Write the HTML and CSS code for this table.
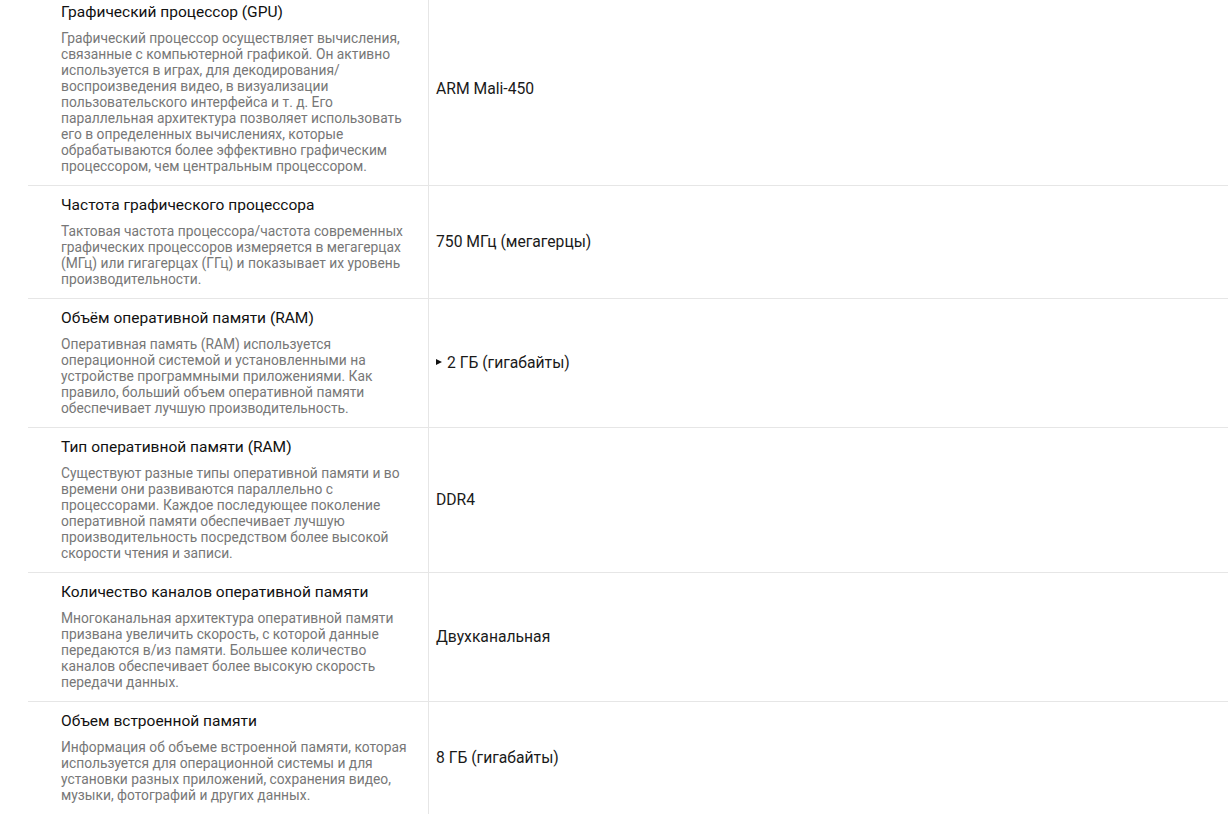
FILE: index.html
```html
<!DOCTYPE html>
<html lang="ru">

<head>
  <meta charset="UTF-8" />
  <meta name="viewport" content="width=device-width, initial-scale=1.0" />
  <title>Характеристики</title>
  <link rel="stylesheet" href="styles.css">
</head>

<body>
  <main class="specs">
    <div class="spec-row">
      <div class="spec-name">
        <h3 class="spec-title">Графический процессор (GPU)</h3>
        <p class="spec-desc">Графический процессор осуществляет вычисления, связанные с компьютерной графикой. Он активно используется в играх, для декодирования/ воспроизведения видео, в визуализации пользовательского интерфейса и т. д. Его параллельная архитектура позволяет использовать его в определенных вычислениях, которые обрабатываются более эффективно графическим процессором, чем центральным процессором.</p>
      </div>
      <div class="spec-value">ARM Mali-450</div>
    </div>

    <div class="spec-row">
      <div class="spec-name">
        <h3 class="spec-title">Частота графического процессора</h3>
        <p class="spec-desc">Тактовая частота процессора/частота современных графических процессоров измеряется в мегагерцах (МГц) или гигагерцах (ГГц) и показывает их уровень производительности.</p>
      </div>
      <div class="spec-value">750 МГц (мегагерцы)</div>
    </div>

    <div class="spec-row">
      <div class="spec-name">
        <h3 class="spec-title">Объём оперативной памяти (RAM)</h3>
        <p class="spec-desc">Оперативная память (RAM) используется операционной системой и установленными на устройстве программными приложениями. Как правило, больший объем оперативной памяти обеспечивает лучшую производительность.</p>
      </div>
      <div class="spec-value">
        <details class="spec-details">
          <summary>2 ГБ (гигабайты)</summary>
        </details>
      </div>
    </div>

    <div class="spec-row">
      <div class="spec-name">
        <h3 class="spec-title">Тип оперативной памяти (RAM)</h3>
        <p class="spec-desc">Существуют разные типы оперативной памяти и во времени они развиваются параллельно с процессорами. Каждое последующее поколение оперативной памяти обеспечивает лучшую производительность посредством более высокой скорости чтения и записи.</p>
      </div>
      <div class="spec-value">DDR4</div>
    </div>

    <div class="spec-row">
      <div class="spec-name">
        <h3 class="spec-title">Количество каналов оперативной памяти</h3>
        <p class="spec-desc">Многоканальная архитектура оперативной памяти призвана увеличить скорость, с которой данные передаются в/из памяти. Большее количество каналов обеспечивает более высокую скорость передачи данных.</p>
      </div>
      <div class="spec-value">Двухканальная</div>
    </div>

    <div class="spec-row">
      <div class="spec-name">
        <h3 class="spec-title">Объем встроенной памяти</h3>
        <p class="spec-desc">Информация об объеме встроенной памяти, которая используется для операционной системы и для установки разных приложений, сохранения видео, музыки, фотографий и других данных.</p>
      </div>
      <div class="spec-value">8 ГБ (гигабайты)</div>
    </div>
  </main>
</body>

</html>
```

FILE: styles.css
```css
* {
  padding: 0;
  margin: 0;
  box-sizing: border-box;
  font-family: Roboto, "Liberation Sans", sans-serif;
}

body {
  background: #fff;
  color: #212121;
}

.specs {
  width: 1200px;
  margin: -7px 0 0 28px;
}

.spec-row {
  display: grid;
  grid-template-columns: 401px 1fr;
  border-bottom: 1px solid #e6e6e6;
}

.spec-row:last-child {
  border-bottom: 0;
}

.spec-name {
  padding: 9px 20px 11px 33px;
  border-right: 1px solid #e6e6e6;
}

.spec-title {
  font-size: 15.5px;
  font-weight: 400;
  line-height: 20px;
  color: #111;
  margin-bottom: 8px;
}

.spec-desc {
  font-size: 13.8px;
  line-height: 16px;
  color: #777;
}

.spec-value {
  display: flex;
  align-items: center;
  padding: 0 8px 2px 7px;
  font-size: 15.7px;
  color: #1a1a1a;
}

.spec-details summary {
  display: flex;
  align-items: center;
  list-style: none;
  cursor: pointer;
}

.spec-details summary::-webkit-details-marker {
  display: none;
}

.spec-details summary::before {
  content: "";
  border-left: 6px solid #111;
  border-top: 3.5px solid transparent;
  border-bottom: 3.5px solid transparent;
  margin-right: 5px;
}
```
